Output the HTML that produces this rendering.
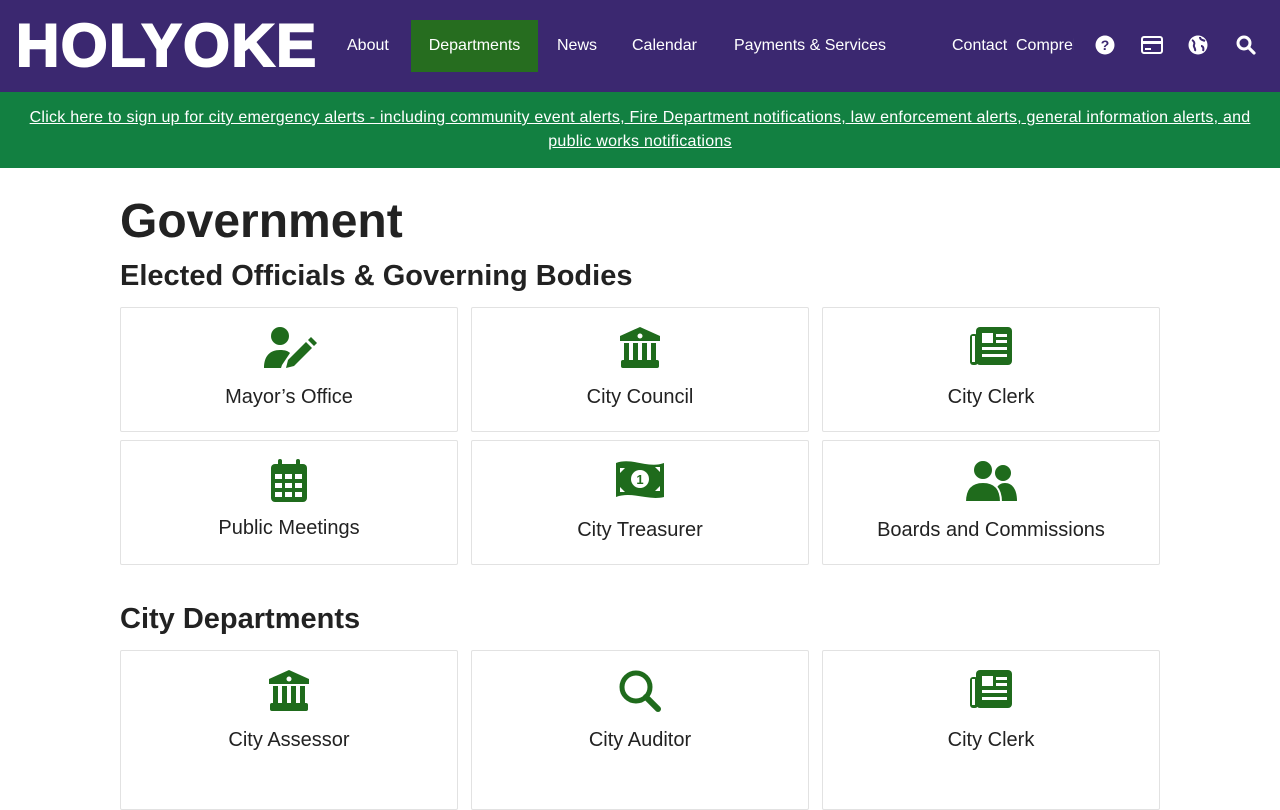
<!DOCTYPE html>
<html><head><meta charset="utf-8"><style>
*{margin:0;padding:0;box-sizing:border-box}
body{width:1280px;height:800px;overflow:hidden;background:#fff;font-family:"Liberation Sans",sans-serif;color:#222}
.top{height:92px;background:#3b2870;position:relative}
.logo{position:absolute;left:16px;top:14px;font-size:60px;font-weight:900;color:#fff;letter-spacing:1.5px;line-height:64px;-webkit-text-stroke:2px #fff}
.nav{position:absolute;top:20px;height:52px;color:#fff;font-size:16px;line-height:52px}
.nav span{position:absolute;white-space:nowrap}
.dep{background:#266d1f;left:411px;width:127px;text-align:center}
.ic{position:absolute;top:35px}
.banner{height:76px;background:#128041;color:#fff;text-align:center;font-size:16px;line-height:24px;position:relative}
.banner a{color:#fff;text-decoration:underline;position:absolute;left:15px;right:15px;top:14px;letter-spacing:0.25px}
h1{position:absolute;left:120px;top:194px;font-size:48px;font-weight:800;color:#222}
h2{position:absolute;left:120px;font-size:29px;font-weight:700;color:#222}
.card{position:absolute;width:338px;height:125px;border:1px solid #e2e2e2;border-radius:2px;text-align:center}
.card svg{position:absolute;left:50%;transform:translateX(-50%);top:18px}
.card div{position:absolute;left:0;right:0;top:78px;font-size:20px;color:#222}
</style></head><body>
<div class="top">
<div class="logo">HOLYOKE</div>
<div class="nav" style="left:0;width:1080px">
<span style="left:347px">About</span>
<span class="dep">Departments</span>
<span style="left:557px">News</span>
<span style="left:632px">Calendar</span>
<span style="left:734px">Payments &amp; Services</span>
<span style="left:952px">Contact</span>
<span style="left:1016px;width:58px;overflow:hidden">Comprehensive</span>
</div>
<svg class="ic" style="left:1095px" width="20" height="20" viewBox="0 0 20 20"><circle cx="10" cy="10" r="9.5" fill="#fff"/><text x="10" y="15" font-size="14" font-weight="bold" text-anchor="middle" fill="#3b2870" font-family="Liberation Sans">?</text></svg>
<svg class="ic" style="left:1141px;top:36px" width="22" height="18" viewBox="0 0 22 18"><rect x="1" y="1" width="20" height="16" rx="2" fill="none" stroke="#fff" stroke-width="2"/><rect x="1" y="5" width="20" height="3" fill="#fff"/><rect x="4" y="12" width="6" height="2" fill="#fff"/></svg>
<svg class="ic" style="left:1188px" width="20" height="20" viewBox="0 0 20 20"><circle cx="10" cy="10" r="9.5" fill="#fff"/><path d="M4 5c2 1 3 3 2 5s2 3 1 6M12 2c0 3 3 3 5 4M13 11c2 0 3 2 2 5" stroke="#3b2870" stroke-width="2" fill="none"/></svg>
<svg class="ic" style="left:1236px" width="20" height="20" viewBox="0 0 20 20"><circle cx="8" cy="8" r="6" fill="none" stroke="#fff" stroke-width="3"/><path d="M12.5 12.5l5.5 5.5" stroke="#fff" stroke-width="3.2" stroke-linecap="round"/></svg>
</div>
<div class="banner"><a>Click here to sign up for city emergency alerts - including community event alerts, Fire Department notifications, law enforcement alerts, general information alerts, and public works notifications</a></div>
<h1>Government</h1>
<h2 style="top:260px">Elected Officials &amp; Governing Bodies</h2>
<h2 style="top:603px">City Departments</h2>

<div class="card" style="left:120px;top:307px"><svg width="56" height="44" viewBox="0 0 56 44"><circle cx="19" cy="10" r="9" fill="#1f6b1c"/><path d="M3 42c0-12 6-18 16-18 5 0 8 1 10 3l-8 12-1 3z" fill="#1f6b1c"/><path d="M25 42l2-8 18-18 6 6-18 18z" fill="#1f6b1c"/><path d="M47 14l3-3 6 6-3 3z" fill="#1f6b1c"/></svg><div>Mayor’s Office</div></div>
<div class="card" style="left:471px;top:307px"><svg width="44" height="44" viewBox="0 0 44 44"><path d="M22 1L2 10v5h40v-5z" fill="#1f6b1c"/><circle cx="22" cy="10" r="2.5" fill="#fff"/><rect x="6" y="17" width="5" height="17" fill="#1f6b1c"/><rect x="15" y="17" width="5" height="17" fill="#1f6b1c"/><rect x="24" y="17" width="5" height="17" fill="#1f6b1c"/><rect x="33" y="17" width="5" height="17" fill="#1f6b1c"/><rect x="3" y="34" width="38" height="8" rx="2" fill="#1f6b1c"/></svg><div>City Council</div></div>
<div class="card" style="left:822px;top:307px"><svg width="44" height="40" viewBox="0 0 44 40"><rect x="7" y="1" width="36" height="38" rx="4" fill="#1f6b1c"/><rect x="1" y="8" width="8" height="31" rx="3" fill="#1f6b1c"/><rect x="3" y="10" width="3" height="26" fill="#fff"/><rect x="13" y="7" width="11" height="10" fill="#fff"/><rect x="27" y="8" width="11" height="3" fill="#fff"/><rect x="27" y="14" width="11" height="3" fill="#fff"/><rect x="13" y="21" width="25" height="3" fill="#fff"/><rect x="13" y="28" width="25" height="3" fill="#fff"/></svg><div>City Clerk</div></div>

<div class="card" style="left:120px;top:440px"><svg width="38" height="44" viewBox="0 0 38 44"><rect x="1" y="5" width="36" height="38" rx="4" fill="#1f6b1c"/><rect x="8" y="0" width="4" height="9" rx="2" fill="#1f6b1c"/><rect x="26" y="0" width="4" height="9" rx="2" fill="#1f6b1c"/><g fill="#fff"><rect x="5" y="15" width="7" height="5"/><rect x="15" y="15" width="7" height="5"/><rect x="25" y="15" width="7" height="5"/><rect x="5" y="24" width="7" height="5"/><rect x="15" y="24" width="7" height="5"/><rect x="25" y="24" width="7" height="5"/><rect x="5" y="33" width="7" height="5"/><rect x="15" y="33" width="7" height="5"/><rect x="25" y="33" width="7" height="5"/></g></svg><div style="top:76px">Public Meetings</div></div>
<div class="card" style="left:471px;top:440px"><svg width="50" height="40" viewBox="0 0 50 40"><path d="M1 4c16-6 32 6 48 0v34c-16 4-32-6-48 0z" fill="#1f6b1c"/><circle cx="25" cy="20" r="9" fill="#fff"/><text x="25" y="25" font-size="13" font-weight="bold" text-anchor="middle" fill="#1f6b1c">1</text><path d="M5 9l5 0-5 5zM45 8l-5 0 5 5zM5 33l5 0-5-5zM45 32l-5 0 5-5z" fill="#fff"/></svg><div>City Treasurer</div></div>
<div class="card" style="left:822px;top:440px"><svg width="54" height="44" viewBox="0 0 54 44"><circle cx="39" cy="14" r="8" fill="#1f6b1c"/><path d="M30 42c0-12 4-18 11-18s12 6 12 18z" fill="#1f6b1c"/><circle cx="19" cy="11" r="10" fill="#1f6b1c" stroke="#fff" stroke-width="2"/><path d="M1 43c0-14 7-20 18-20s18 6 18 20z" fill="#1f6b1c" stroke="#fff" stroke-width="2"/></svg><div>Boards and Commissions</div></div>

<div class="card" style="left:120px;top:650px;height:160px"><svg width="44" height="44" viewBox="0 0 44 44"><path d="M22 1L2 10v5h40v-5z" fill="#1f6b1c"/><circle cx="22" cy="10" r="2.5" fill="#fff"/><rect x="6" y="17" width="5" height="17" fill="#1f6b1c"/><rect x="15" y="17" width="5" height="17" fill="#1f6b1c"/><rect x="24" y="17" width="5" height="17" fill="#1f6b1c"/><rect x="33" y="17" width="5" height="17" fill="#1f6b1c"/><rect x="3" y="34" width="38" height="8" rx="2" fill="#1f6b1c"/></svg><div>City Assessor</div></div>
<div class="card" style="left:471px;top:650px;height:160px"><svg width="44" height="44" viewBox="0 0 44 44"><circle cx="18" cy="18" r="14" fill="none" stroke="#1f6b1c" stroke-width="5"/><path d="M28 28l12 12" stroke="#1f6b1c" stroke-width="6" stroke-linecap="round"/></svg><div>City Auditor</div></div>
<div class="card" style="left:822px;top:650px;height:160px"><svg width="44" height="40" viewBox="0 0 44 40"><rect x="7" y="1" width="36" height="38" rx="4" fill="#1f6b1c"/><rect x="1" y="8" width="8" height="31" rx="3" fill="#1f6b1c"/><rect x="3" y="10" width="3" height="26" fill="#fff"/><rect x="13" y="7" width="11" height="10" fill="#fff"/><rect x="27" y="8" width="11" height="3" fill="#fff"/><rect x="27" y="14" width="11" height="3" fill="#fff"/><rect x="13" y="21" width="25" height="3" fill="#fff"/><rect x="13" y="28" width="25" height="3" fill="#fff"/></svg><div>City Clerk</div></div>
</body></html>
